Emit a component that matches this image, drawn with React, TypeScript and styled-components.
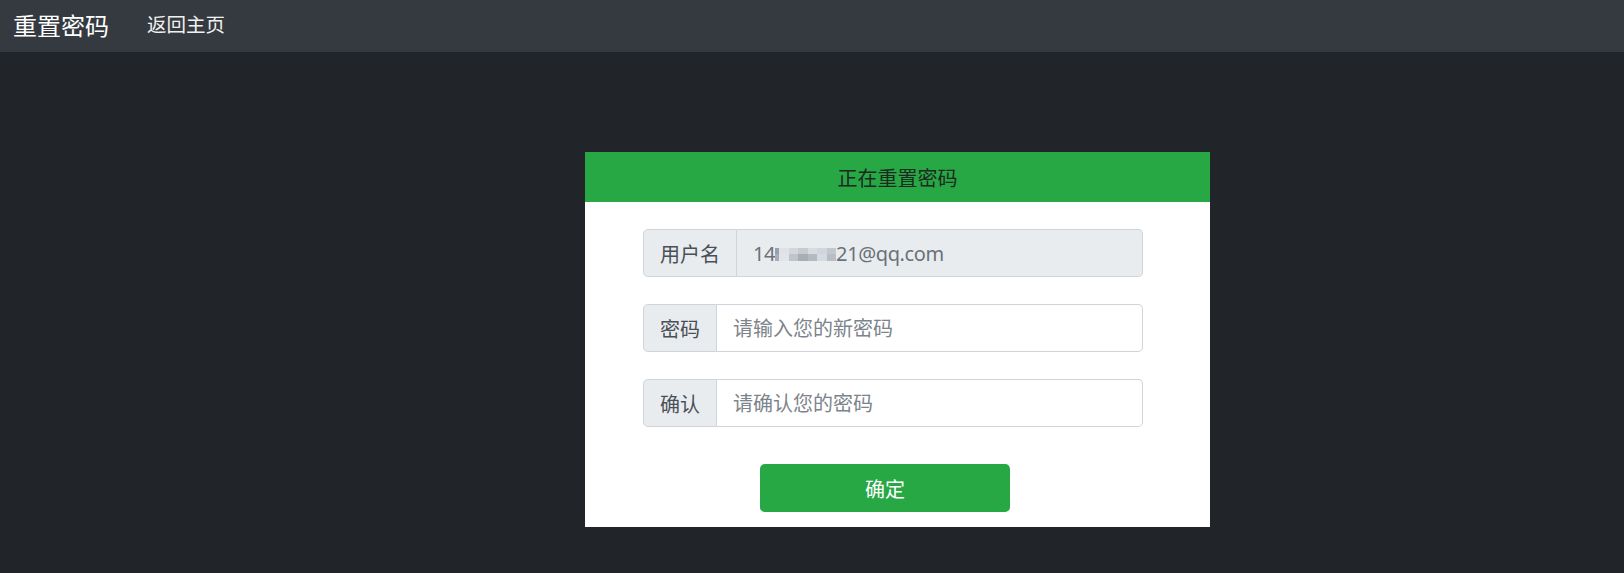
import React from 'react';
import styled, { createGlobalStyle } from 'styled-components';

const GlobalStyle = createGlobalStyle`
  body {
    margin: 0;
    background: #212529;
    font-family: "Noto Sans", "Noto Sans CJK SC", sans-serif;
  }
  * {
    box-sizing: border-box;
  }
`;

const cjk = `"Noto Sans CJK SC", "Noto Sans", sans-serif`;

const Navbar = styled.nav`
  height: 52px;
  background: #343a40;
  display: flex;
  align-items: center;
  padding: 0 13px;
`;

const Brand = styled.a`
  font-family: ${cjk};
  font-size: 24px;
  color: #ffffff;
  text-decoration: none;
  line-height: 1;
  margin-top: -2px;
`;

const NavLink = styled.a`
  font-family: ${cjk};
  font-size: 19.5px;
  color: #f1f1f1;
  text-decoration: none;
  margin-left: 38px;
  line-height: 1;
  margin-top: -4px;
`;

const Main = styled.main`
  padding: 100px 0 0 585px;
`;

const Card = styled.section`
  width: 625px;
  background: #ffffff;
`;

const CardHeader = styled.div`
  height: 50px;
  background: #28a745;
  display: flex;
  align-items: center;
  justify-content: center;
  font-family: ${cjk};
  font-size: 20px;
  color: #1c2a22;
`;

const CardBody = styled.form`
  padding: 27px 67px 15px 58px;
  display: flex;
  flex-direction: column;
  gap: 27px;
`;

const InputGroup = styled.div`
  display: flex;
  height: 48px;
`;

const Addon = styled.span`
  display: flex;
  align-items: center;
  padding: 0 16px;
  background: #e9ecef;
  border: 1px solid #ced4da;
  border-radius: 4.8px 0 0 4.8px;
  font-family: ${cjk};
  font-size: 20px;
  color: #495057;
`;

const Field = styled.input`
  flex: 1;
  min-width: 0;
  height: 48px;
  border: 1px solid #ced4da;
  border-left: 0;
  border-radius: 0 4.8px 4.8px 0;
  padding: 0 16px;
  background: #ffffff;
  font-family: "Noto Sans", ${cjk};
  font-size: 20px;
  color: #495057;
  outline: none;

  &::placeholder {
    font-family: ${cjk};
    color: #7d848b;
  }
`;

const ValueBox = styled.div`
  flex: 1;
  display: flex;
  align-items: center;
  border: 1px solid #ced4da;
  border-left: 0;
  border-radius: 0 4.8px 4.8px 0;
  padding: 0 16px;
  background: #e9ecef;
  font-family: "Noto Sans", sans-serif;
  font-size: 20px;
  color: #6a7178;
  letter-spacing: -0.4px;
`;

const Mosaic = styled.span`
  display: inline-grid;
  grid-template-columns: 4px repeat(6, 9.5px);
  grid-template-rows: 6px 7px;
  margin-top: 2px;
`;

const Tile = styled.span<{ $c: string }>`
  background: ${(p) => p.$c};
`;

const SubmitButton = styled.button`
  margin: 10px 0 0 117px;
  width: 250px;
  height: 48px;
  border: 0;
  border-radius: 4.8px;
  background: #28a745;
  color: #ffffff;
  font-family: ${cjk};
  font-size: 20px;
  cursor: pointer;
`;

const tiles = [
  '#9aa0a7', '#dfe2e6', '#d3d7dc', '#c6cbd1', '#d8dce1', '#d2d6dc', '#c3c8ce',
  '#a8adb4', '#e1e4e8', '#bfc4ca', '#a9aeb6', '#b4bac1', '#d4dbe4', '#b9bec5',
];

const App = () => {
  return (
    <>
      <GlobalStyle />
      <Navbar>
        <Brand href="#">重置密码</Brand>
        <NavLink href="#">返回主页</NavLink>
      </Navbar>
      <Main>
        <Card>
          <CardHeader>正在重置密码</CardHeader>
          <CardBody onSubmit={(e) => e.preventDefault()}>
            <InputGroup>
              <Addon>用户名</Addon>
              <ValueBox>
                14
                <Mosaic>
                  {tiles.map((c, i) => (
                    <Tile key={i} $c={c} />
                  ))}
                </Mosaic>
                21@qq.com
              </ValueBox>
            </InputGroup>
            <InputGroup>
              <Addon>密码</Addon>
              <Field type="password" placeholder="请输入您的新密码" />
            </InputGroup>
            <InputGroup>
              <Addon>确认</Addon>
              <Field type="password" placeholder="请确认您的密码" />
            </InputGroup>
            <SubmitButton type="submit">确定</SubmitButton>
          </CardBody>
        </Card>
      </Main>
    </>
  );
};

export default App;
